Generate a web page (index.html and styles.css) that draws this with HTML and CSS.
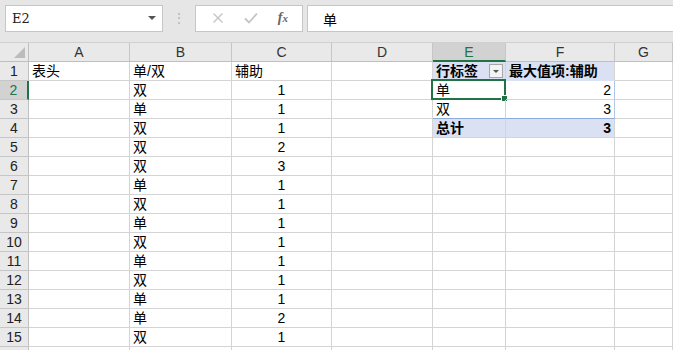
FILE: index.html
```html
<!DOCTYPE html>
<html lang="zh-CN">
<head>
    <meta charset="UTF-8">
    <title>数据透视表</title>
    <link rel="stylesheet" href="styles.css">
</head>
<body>
    <div class="toolbar">
        <div class="namebox">
            <span>E2</span>
            <span class="caret"></span>
        </div>
        <div class="grip">⋮</div>
        <div class="fxbox">
            <svg width="12" height="12" viewBox="0 0 12 12"><path d="M1.5 1.5 L10.5 10.5 M10.5 1.5 L1.5 10.5" stroke="#c4c4c4" stroke-width="1.4" fill="none"/></svg>
            <svg width="14" height="12" viewBox="0 0 14 12"><path d="M1 6.5 L5 10.5 L13 1.5" stroke="#c4c4c4" stroke-width="1.8" fill="none"/></svg>
            <span class="fx"><i>f</i><i class="x">x</i></span>
        </div>
        <div class="formula">单</div>
    </div>

    <div class="sheet" id="sheet"></div>

    <script>
        var cols = ['A', 'B', 'C', 'D', 'E', 'F', 'G'];
        var colB = ['单/双', '双', '单', '双', '双', '双', '单', '双', '单', '双', '单', '双', '单', '单', '双'];
        var colC = ['辅助', '1', '1', '1', '2', '3', '1', '1', '1', '1', '1', '1', '1', '2', '1'];
        var sheet = document.getElementById('sheet');

        function cell(cls, text) {
            var d = document.createElement('div');
            d.className = 'cell ' + cls;
            if (text) d.textContent = text;
            sheet.appendChild(d);
            return d;
        }

        // column headers
        cell('corner');
        cols.forEach(function (c) {
            cell('colhead' + (c === 'E' ? ' active' : ''), c);
        });

        // rows
        for (var r = 1; r <= 16; r++) {
            cell('rowhead' + (r === 2 ? ' active' : ''), r <= 15 ? String(r) : '');
            cell('', r === 1 ? '表头' : '');
            cell('', colB[r - 1] || '');
            cell(r === 1 ? '' : 'center', colC[r - 1] || '');
            cell('');

            if (r === 1) {
                var e = cell('pivot head', '行标签');
                var btn = document.createElement('span');
                btn.className = 'dropbtn';
                e.appendChild(btn);
                cell('pivot head', '最大值项:辅助');
            } else if (r === 2) {
                var sel = cell('pivot-row', '单');
                var box = document.createElement('span');
                box.className = 'selection';
                sel.appendChild(box);
                cell('pivot-row right', '2');
            } else if (r === 3) {
                cell('pivot-row last', '双');
                cell('pivot-row last right', '3');
            } else if (r === 4) {
                cell('pivot total', '总计');
                cell('pivot total right', '3');
            } else {
                cell('');
                cell('');
            }
            cell('');
        }
    </script>
</body>
</html>
```

FILE: styles.css
```css
body {
    margin: 0;
    width: 673px;
    height: 350px;
    overflow: hidden;
    background: #ffffff;
    font-family: "Liberation Sans", "Noto Sans CJK SC", sans-serif;
    font-size: 14px;
    color: #000;
}
.toolbar {
    display: flex;
    align-items: center;
    height: 43px;
    padding: 0 0 6px 5px;
    box-sizing: border-box;
    background: #e6e6e6;
    border-bottom: 1px solid #d0d0d0;
}
.namebox {
    display: flex;
    align-items: center;
    justify-content: space-between;
    width: 158px;
    height: 27px;
    box-sizing: border-box;
    padding: 0 6px 0 6px;
    background: #fff;
    border: 1px solid #c6c6c6;
    font-family: "DejaVu Serif", serif;
    font-size: 13px;
    color: #222;
}
.caret {
    width: 0;
    height: 0;
    border-left: 4px solid transparent;
    border-right: 4px solid transparent;
    border-top: 4px solid #555;
}
.grip {
    width: 32px;
    text-align: center;
    color: #b8b8b8;
    font-size: 14px;
}
.fxbox {
    display: flex;
    align-items: center;
    justify-content: space-around;
    width: 108px;
    height: 27px;
    box-sizing: border-box;
    padding: 0 4px 0 6px;
    background: #fff;
    border: 1px solid #c6c6c6;
}
.fx {
    font-family: "Liberation Serif", serif;
    font-size: 14px;
    color: #666;
    font-weight: bold;
}
.fx .x {
    font-size: 11px;
}
.formula {
    flex: 1;
    height: 27px;
    margin-left: 4px;
    box-sizing: border-box;
    padding: 3px 0 0 15px;
    background: #fff;
    border: 1px solid #c6c6c6;
    border-right: none;
    font-family: "Noto Sans CJK SC", sans-serif;
    font-size: 14px;
}
.sheet {
    display: grid;
    grid-template-columns: 29px 101px 102px 100px 101px 73px 109px 1fr;
    grid-template-rows: 19px;
    grid-auto-rows: 19px;
}
.cell {
    box-sizing: border-box;
    border-right: 1px solid #d4d4d4;
    border-bottom: 1px solid #d4d4d4;
    padding: 0 3px;
    line-height: 19px;
    white-space: nowrap;
    overflow: visible;
    position: relative;
}
.center {
    text-align: center;
}
.right {
    text-align: right;
}
.corner {
    background: #e9e9e9;
    border-right-color: #bfbfbf;
    border-bottom-color: #bfbfbf;
}
.corner::after {
    content: "";
    position: absolute;
    right: 3px;
    bottom: 3px;
    border-left: 11px solid transparent;
    border-bottom: 11px solid #bcbcbc;
}
.colhead {
    background: #e9e9e9;
    text-align: center;
    color: #333;
    border-right-color: #c6c6c6;
    border-bottom-color: #bfbfbf;
    line-height: 19px;
}
.colhead.active {
    background: #d2d2d2;
    color: #217346;
    border-bottom: 2px solid #217346;
}
.rowhead {
    background: #e9e9e9;
    text-align: center;
    color: #222;
    border-right-color: #bfbfbf;
    border-bottom-color: #c6c6c6;
    padding: 0;
}
.rowhead.active {
    background: #d2d2d2;
    color: #217346;
    border-right: 2px solid #217346;
}
.pivot.head {
    background: #d9e1f2;
    font-weight: bold;
    border-bottom-color: #d9e1f2;
}
.pivot.total {
    background: #d9e1f2;
    font-weight: bold;
}
.pivot-row.last {
    border-bottom-color: #8ea9db;
}
.pivot-row.right {
    border-right-color: #b4c6e7;
}
.dropbtn {
    position: absolute;
    right: 2px;
    top: 2px;
    width: 14px;
    height: 14px;
    box-sizing: border-box;
    background: #f3f3f3;
    border: 1px solid #a6a6a6;
}
.dropbtn::after {
    content: "";
    position: absolute;
    left: 3px;
    top: 5px;
    border-left: 3px solid transparent;
    border-right: 3px solid transparent;
    border-top: 3px solid #555;
}
.selection {
    position: absolute;
    left: -2px;
    top: -2px;
    right: -1px;
    bottom: -1px;
    border: 2px solid #217346;
    pointer-events: none;
}
.selection::after {
    content: "";
    position: absolute;
    right: -4px;
    bottom: -4px;
    width: 5px;
    height: 5px;
    background: #217346;
    border: 1px solid #fff;
}
```
